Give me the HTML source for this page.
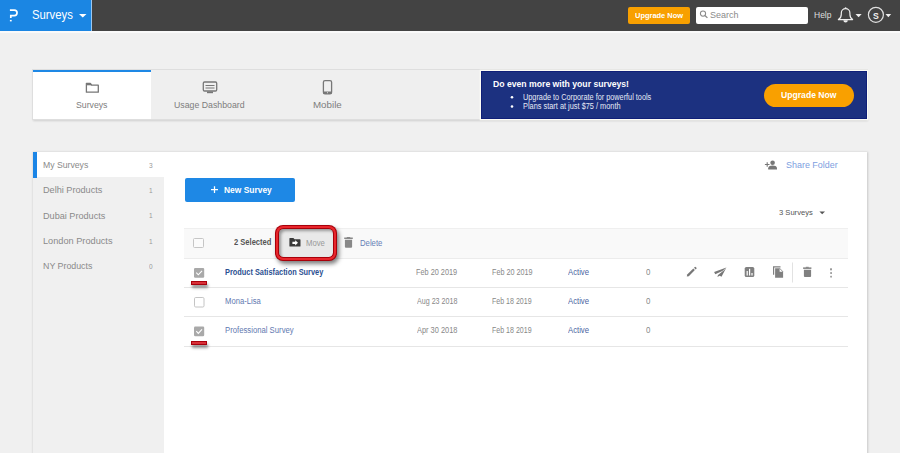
<!DOCTYPE html>
<html><head><meta charset="utf-8">
<style>
*{box-sizing:border-box;margin:0;padding:0}
html,body{width:900px;height:453px;overflow:hidden;background:#f0f0f0;font-family:"Liberation Sans",sans-serif;position:relative}
.a{position:absolute;white-space:nowrap}
</style></head><body>
<!-- top bar -->
<div class="a" style="left:0;top:0;width:900px;height:31px;background:#434343"></div>
<div class="a" style="left:0;top:31px;width:900px;height:2px;background:#fafafa"></div>
<div class="a" style="left:0;top:0;width:91px;height:31px;background:#1b86e3"></div>
<div class="a" style="left:91px;top:0;width:1px;height:31px;background:#9cc8f0"></div>
<div class="a" style="left:628px;top:7px;width:62px;height:17px;background:#f8a000;border-radius:2px"></div>
<div class="a" style="left:696px;top:7px;width:112px;height:17px;background:#fff;border-radius:2px;"></div>

<!-- tabs panel -->
<div class="a" style="left:33px;top:70px;width:834px;height:49px;background:#efefef;box-shadow:0 0 0 1px #dedede,0 1px 2px 0.5px rgba(0,0,0,.14)"></div>
<div class="a" style="left:33px;top:70px;width:118px;height:49px;background:#fff;border-top:2px solid #1e88e5"></div>
<div class="a" style="left:481px;top:70.5px;width:386px;height:48.7px;background:#1c3180;border:0.7px solid #0f1f78;box-shadow:0 0 0 1.3px #fcfcf6"></div>
<div class="a" style="left:764px;top:84px;width:90px;height:23px;border-radius:12px;background:#f9a000"></div>

<!-- card -->
<div class="a" style="left:33px;top:152px;width:834px;height:310px;background:#fff;box-shadow:0 0 2px 0.5px rgba(0,0,0,.16)"></div>
<div class="a" style="left:33px;top:177px;width:131px;height:290px;background:#f0f0f0"></div>
<div class="a" style="left:33px;top:152px;width:3.6px;height:25.5px;background:#1b85e6"></div>


<!-- sidebar -->

<!-- main -->
<div class="a" style="left:185px;top:178px;width:110px;height:24px;background:#1e88e5;border-radius:2px"></div>

<!-- table -->
<div class="a" style="left:183.5px;top:228px;width:664.5px;height:31px;background:#f9f9f9;border-top:1px solid #efefef;border-bottom:1px solid #ececec"></div>
<div class="a" style="left:193.3px;top:237.5px;width:10.6px;height:10.6px;border:1px solid #c6c6c6;border-radius:1.5px;background:#fbfbfb"></div>
<div class="a" style="left:275px;top:225px;width:62px;height:36px;border-radius:8px;background:#a8000a;box-shadow:2px 3px 4px rgba(0,0,0,.5)"></div>
<div class="a" style="left:275.9px;top:225.9px;width:60.2px;height:34.2px;border-radius:7.1px;background:#e8262c"></div>
<div class="a" style="left:277.6px;top:227.6px;width:56.8px;height:30.8px;border-radius:5.6px;background:#a8000a"></div>
<div class="a" style="left:278.6px;top:228.6px;width:54.8px;height:28.8px;border-radius:4.6px;background:#e9e9e9;box-shadow:inset 2px 2px 3px rgba(0,0,0,.35)"></div>

<div class="a" style="left:184px;top:287px;width:664px;height:1px;background:#e6e6e6"></div>
<div class="a" style="left:184px;top:316px;width:664px;height:1px;background:#e6e6e6"></div>
<div class="a" style="left:184px;top:346px;width:664px;height:1px;background:#e6e6e6"></div>



<!-- icons -->
<svg class="a" style="left:0;top:0" width="900" height="453" viewBox="0 0 900 453">
 <!-- logo -->
 <path d="M9.9 10.1H14.3A2.75 2.75 0 0 1 14.3 15.6H10.8V17.9" fill="none" stroke="#fff" stroke-width="1.7"/>
 <rect x="9.9" y="19.9" width="1.8" height="1.5" fill="#fff"/>
 <path d="M79 14H86.5L82.75 17.5Z" fill="#fff"/>
 <!-- search -->
 <circle cx="703" cy="13.6" r="2.6" fill="none" stroke="#8a8a8a" stroke-width="1.05"/>
 <path d="M704.9 15.5L707.4 17.9" stroke="#8a8a8a" stroke-width="1.3"/>
 <!-- bell -->
 <path d="M838.4 19.6H852.6C850.6 18.2 849.9 16.6 849.9 14.2V12.9A4.3 4.3 0 0 0 841.3 12.9V14.2C841.3 16.6 840.6 18.2 838.4 19.6Z" fill="none" stroke="#eee" stroke-width="1.2" stroke-linejoin="round"/>
 <circle cx="845.6" cy="8.1" r="0.9" fill="#eee"/>
 <path d="M843.4 20.2H847.8A2.2 2.4 0 0 1 843.4 20.2Z" fill="#eee"/>
 <path d="M855.5 14H861.7L858.6 17.2Z" fill="#eee"/>
 <!-- avatar -->
 <circle cx="875.9" cy="14.8" r="7.5" fill="none" stroke="#e0e0e0" stroke-width="1.2"/>
 <path d="M885.5 14H891.2L888.35 17.2Z" fill="#eee"/>
 <!-- tab icons -->
 <path d="M86.4 83.3V92.2H98.3V85.2H91.6L90.3 83.3Z" fill="none" stroke="#777" stroke-width="1.3" stroke-linejoin="round"/>
 <path d="M86.4 84.6H91.5" stroke="#777" stroke-width="1.4"/>
 <rect x="203.3" y="82" width="13.4" height="9" rx="1.2" fill="none" stroke="#777" stroke-width="1.3"/>
 <path d="M205.5 85.5H214.5M205.5 88H214.5" stroke="#777" stroke-width="1"/>
 <rect x="207" y="91.5" width="6" height="1.7" fill="#777"/>
 <rect x="323.4" y="80.6" width="8.2" height="13.3" rx="1.6" fill="none" stroke="#777" stroke-width="1.3"/>
 <rect x="323.4" y="91.5" width="8.2" height="2.5" fill="#777"/>
 <rect x="327" y="92.2" width="1" height="1" fill="#ddd"/>
 <!-- bullets -->
 <circle cx="512" cy="97.3" r="1.3" fill="#fff"/>
 <circle cx="512" cy="106.5" r="1.3" fill="#fff"/>
 <!-- person add -->
 <path d="M764.9 164.5H769.5M767.2 162.2V166.8" stroke="#777" stroke-width="1.1"/>
 <circle cx="772.6" cy="162.7" r="2.3" fill="#777"/>
 <path d="M768.2 169.6V168.3C768.2 166.3 770.5 165.6 772.6 165.6C774.7 165.6 777 166.3 777 168.3V169.6Z" fill="#777"/>
 <!-- plus in new survey -->
 <path d="M211 189.7H218M214.5 186.3V193" stroke="#fff" stroke-width="1.25"/>
 <!-- 3 surveys triangle -->
 <path d="M819.4 211.5H825L822.2 214.3Z" fill="#555"/>
 <!-- move icon -->
 <path d="M289.9 238H293.4L294.6 239.3H299.9A0.6 0.6 0 0 1 300.5 239.9V245.9A0.6 0.6 0 0 1 299.9 246.5H290A0.6 0.6 0 0 1 289.4 245.9V238.5A0.5 0.5 0 0 1 289.9 238Z" fill="#3a3a3a"/>
 <path d="M292.4 241.7H295.2V240.3L298 242.85L295.2 245.4V244H292.4Z" fill="#fff"/>
 <!-- trash header -->
 <path d="M344.2 237.5H352.8V239H344.2Z" fill="#888"/>
 <path d="M346.8 237H350.2V238H346.8Z" fill="#888"/>
 <path d="M344.9 239.7H352.1V246.7A1 1 0 0 1 351.1 247.7H345.9A1 1 0 0 1 344.9 246.7Z" fill="#888"/>
</svg>

<!-- row icons & checkboxes -->
<svg class="a" style="left:0;top:0" width="900" height="453" viewBox="0 0 900 453">
 <!-- checkboxes -->
 <rect x="194" y="267.9" width="10.2" height="9.8" rx="1.2" fill="#a9a9a9"/>
 <path d="M196.3 272.6L198.3 274.8L202 270.8" fill="none" stroke="#fff" stroke-width="1.1"/>
 <rect x="194.5" y="297.5" width="9.5" height="9.5" rx="1.2" fill="#fff" stroke="#c4c4c4" stroke-width="1"/>
 <rect x="194" y="326.5" width="10.2" height="9.8" rx="1.2" fill="#a9a9a9"/>
 <path d="M196.3 331.2L198.3 333.4L202 329.4" fill="none" stroke="#fff" stroke-width="1.1"/>
 <!-- pencil -->
 <path d="M686.8 276.6L687.2 274.6L693.3 268.5L694.9 270.1L688.8 276.2Z" fill="#777"/>
 <path d="M694 267.7L694.8 266.9A0.6 0.6 0 0 1 695.6 266.9L696.5 267.8A0.6 0.6 0 0 1 696.5 268.6L695.7 269.4Z" fill="#777"/>
 <!-- plane -->
 <path d="M714.1 272.1L726.4 267.5L722.4 270.9L715.3 274.2Z" fill="#777"/>
 <path d="M717.4 277L718 274.9L724 270.3L726.4 267.5L721.5 276.7L719.7 275.7Z" fill="#777"/>
 <!-- chart -->
 <rect x="744.7" y="267" width="9.6" height="10.1" rx="1.6" fill="#808080"/>
 <rect x="746.6" y="271" width="1.2" height="4.5" fill="#fff"/>
 <rect x="749" y="268.8" width="1.2" height="6.7" fill="#fff"/>
 <rect x="751.4" y="273" width="1.2" height="2.5" fill="#fff"/>
 <!-- copy -->
 <path d="M773.6 274.7V266.8H780.5" fill="none" stroke="#808080" stroke-width="1.2"/>
 <path d="M775.1 268.3H780L783.1 271.4V277.7H775.1Z" fill="#808080"/>
 <path d="M779.6 268.8V271.8H782.6Z" fill="#fff"/>
 <!-- separator -->
 <rect x="792" y="262.5" width="1" height="20" fill="#e2e2e2"/>
 <!-- trash -->
 <path d="M803.1 267.4H811.4V268.9H803.1Z" fill="#808080"/>
 <path d="M805.8 266.8H808.7V267.8H805.8Z" fill="#808080"/>
 <path d="M803.9 269.7H811.1V276.1A1 1 0 0 1 810.1 277.1H804.9A1 1 0 0 1 803.9 276.1Z" fill="#808080"/>
 <!-- dots -->
 <rect x="830" y="268.3" width="2" height="2" fill="#9a9a9a"/>
 <rect x="830.2" y="272.1" width="1.8" height="1.8" rx="0.4" fill="#999"/>
 <rect x="830.2" y="275.8" width="1.8" height="1.8" rx="0.4" fill="#999"/>
</svg>
<!-- red underlines -->
<div class="a" style="left:191px;top:281px;width:16px;height:4px;background:linear-gradient(#d81a24,#e04a50 55%,#c8101a);border:0.8px solid #a8000c;box-shadow:1px 3px 3px rgba(0,0,0,.42)"></div>
<div class="a" style="left:191px;top:340.5px;width:16px;height:4px;background:linear-gradient(#d81a24,#e04a50 55%,#c8101a);border:0.8px solid #a8000c;box-shadow:1px 3px 3px rgba(0,0,0,.42)"></div>
<style>.t{line-height:20px;transform-origin:0 0}</style>
<div class="a t" style="left:31.63px;top:7px;line-height:16px;font-size:12.06px;font-weight:normal;color:#fff;transform:scaleX(0.9393)">Surveys</div>
<div class="a t" style="left:634.55px;top:10px;line-height:11px;font-size:7.80px;font-weight:bold;color:#fff;transform:scaleX(0.9570)">Upgrade Now</div>
<div class="a t" style="left:709.75px;top:9px;line-height:12px;font-size:9.30px;font-weight:normal;color:#8a8a8a;transform:scaleX(0.9657)">Search</div>
<div class="a t" style="left:814.12px;top:9px;line-height:12px;font-size:9.01px;font-weight:normal;color:#dedede;transform:scaleX(0.9429)">Help</div>
<div class="a t" style="left:872.94px;top:10px;line-height:12px;font-size:9.16px;font-weight:bold;color:#f0f0f0;transform:scaleX(0.9465)">S</div>
<div class="a t" style="left:76.47px;top:98px;line-height:13px;font-size:9.50px;font-weight:normal;color:#7d7d7d;transform:scaleX(0.9155)">Surveys</div>
<div class="a t" style="left:174.20px;top:98px;line-height:13px;font-size:9.50px;font-weight:normal;color:#7d7d7d;transform:scaleX(0.9211)">Usage Dashboard</div>
<div class="a t" style="left:312.82px;top:98px;line-height:13px;font-size:9.50px;font-weight:normal;color:#7d7d7d;transform:scaleX(1.0265)">Mobile</div>
<div class="a t" style="left:493.09px;top:77px;line-height:13px;font-size:9.74px;font-weight:bold;color:#fff;transform:scaleX(0.8883)">Do even more with your surveys!</div>
<div class="a t" style="left:522.71px;top:92px;line-height:11px;font-size:8.28px;font-weight:normal;color:#e6eaf5;transform:scaleX(0.8833)">Upgrade to Corporate for powerful tools</div>
<div class="a t" style="left:522.71px;top:101px;line-height:11px;font-size:8.14px;font-weight:normal;color:#e6eaf5;transform:scaleX(0.9083)">Plans start at just $75 / month</div>
<div class="a t" style="left:781.18px;top:89px;line-height:12px;font-size:8.90px;font-weight:bold;color:#fff;transform:scaleX(0.9706)">Upgrade Now</div>
<div class="a t" style="left:43.01px;top:159px;line-height:12px;font-size:9.30px;font-weight:normal;color:#8a8a8a;transform:scaleX(0.9322)">My Surveys</div>
<div class="a t" style="left:42.97px;top:184px;line-height:12px;font-size:9.30px;font-weight:normal;color:#8a8a8a;transform:scaleX(0.9810)">Delhi Products</div>
<div class="a t" style="left:42.97px;top:210px;line-height:12px;font-size:9.30px;font-weight:normal;color:#8a8a8a;transform:scaleX(0.9809)">Dubai Products</div>
<div class="a t" style="left:42.86px;top:235px;line-height:12px;font-size:9.30px;font-weight:normal;color:#8a8a8a;transform:scaleX(0.9886)">London Products</div>
<div class="a t" style="left:42.89px;top:260px;line-height:12px;font-size:9.30px;font-weight:normal;color:#8a8a8a;transform:scaleX(0.9497)">NY Products</div>
<div class="a t" style="left:149.04px;top:161px;line-height:9px;font-size:7.00px;font-weight:normal;color:#999;transform:scaleX(0.9422)">3</div>
<div class="a t" style="left:149.08px;top:186px;line-height:9px;font-size:7.00px;font-weight:normal;color:#999;transform:scaleX(0.9302)">1</div>
<div class="a t" style="left:149.08px;top:211px;line-height:9px;font-size:7.00px;font-weight:normal;color:#999;transform:scaleX(0.9302)">1</div>
<div class="a t" style="left:149.08px;top:237px;line-height:9px;font-size:7.00px;font-weight:normal;color:#999;transform:scaleX(0.9302)">1</div>
<div class="a t" style="left:149.04px;top:262px;line-height:9px;font-size:7.00px;font-weight:normal;color:#999;transform:scaleX(0.9226)">0</div>
<div class="a t" style="left:786.45px;top:158px;line-height:13px;font-size:9.45px;font-weight:normal;color:#7d9ee0;transform:scaleX(0.9472)">Share Folder</div>
<div class="a t" style="left:224.11px;top:184px;line-height:12px;font-size:9.01px;font-weight:bold;color:#fff;transform:scaleX(0.9370)">New Survey</div>
<div class="a t" style="left:778.90px;top:207px;line-height:11px;font-size:7.99px;font-weight:normal;color:#555;transform:scaleX(0.9503)">3 Surveys</div>
<div class="a t" style="left:234.07px;top:236px;line-height:12px;font-size:8.87px;font-weight:bold;color:#555;transform:scaleX(0.8535)">2 Selected</div>
<div class="a t" style="left:306.38px;top:237px;line-height:12px;font-size:8.40px;font-weight:normal;color:#999;transform:scaleX(0.9236)">Move</div>
<div class="a t" style="left:360.38px;top:237px;line-height:12px;font-size:8.40px;font-weight:normal;color:#6680b6;transform:scaleX(0.9240)">Delete</div>
<div class="a t" style="left:225.38px;top:266px;line-height:12px;font-size:8.43px;font-weight:bold;color:#2b4f91;transform:scaleX(0.8749)">Product Satisfaction Survey</div>
<div class="a t" style="left:225.39px;top:295px;line-height:12px;font-size:8.50px;font-weight:normal;color:#5f79b0;transform:scaleX(0.9022)">Mona-Lisa</div>
<div class="a t" style="left:225.38px;top:324px;line-height:12px;font-size:8.50px;font-weight:normal;color:#5f79b0;transform:scaleX(0.9081)">Professional Survey</div>
<div class="a t" style="left:416.41px;top:266px;line-height:12px;font-size:8.60px;font-weight:normal;color:#888;transform:scaleX(0.8514)">Feb 20 2019</div>
<div class="a t" style="left:491.92px;top:266px;line-height:12px;font-size:8.60px;font-weight:normal;color:#888;transform:scaleX(0.8409)">Feb 20 2019</div>
<div class="a t" style="left:567.70px;top:266px;line-height:12px;font-size:8.60px;font-weight:normal;color:#4a65a2;transform:scaleX(0.8981)">Active</div>
<div class="a t" style="left:645.68px;top:266px;line-height:12px;font-size:8.60px;font-weight:normal;color:#888;transform:scaleX(0.9205)">0</div>
<div class="a t" style="left:417.00px;top:295px;line-height:12px;font-size:8.60px;font-weight:normal;color:#888;transform:scaleX(0.8282)">Aug 23 2018</div>
<div class="a t" style="left:491.94px;top:295px;line-height:12px;font-size:8.60px;font-weight:normal;color:#888;transform:scaleX(0.8197)">Feb 18 2019</div>
<div class="a t" style="left:567.70px;top:295px;line-height:12px;font-size:8.60px;font-weight:normal;color:#4a65a2;transform:scaleX(0.8981)">Active</div>
<div class="a t" style="left:645.68px;top:295px;line-height:12px;font-size:8.60px;font-weight:normal;color:#888;transform:scaleX(0.9205)">0</div>
<div class="a t" style="left:417.00px;top:324px;line-height:12px;font-size:8.60px;font-weight:normal;color:#888;transform:scaleX(0.8635)">Apr 30 2018</div>
<div class="a t" style="left:491.94px;top:324px;line-height:12px;font-size:8.60px;font-weight:normal;color:#888;transform:scaleX(0.8197)">Feb 18 2019</div>
<div class="a t" style="left:567.70px;top:324px;line-height:12px;font-size:8.60px;font-weight:normal;color:#4a65a2;transform:scaleX(0.8981)">Active</div>
<div class="a t" style="left:645.68px;top:324px;line-height:12px;font-size:8.60px;font-weight:normal;color:#888;transform:scaleX(0.9205)">0</div>
</body></html>
